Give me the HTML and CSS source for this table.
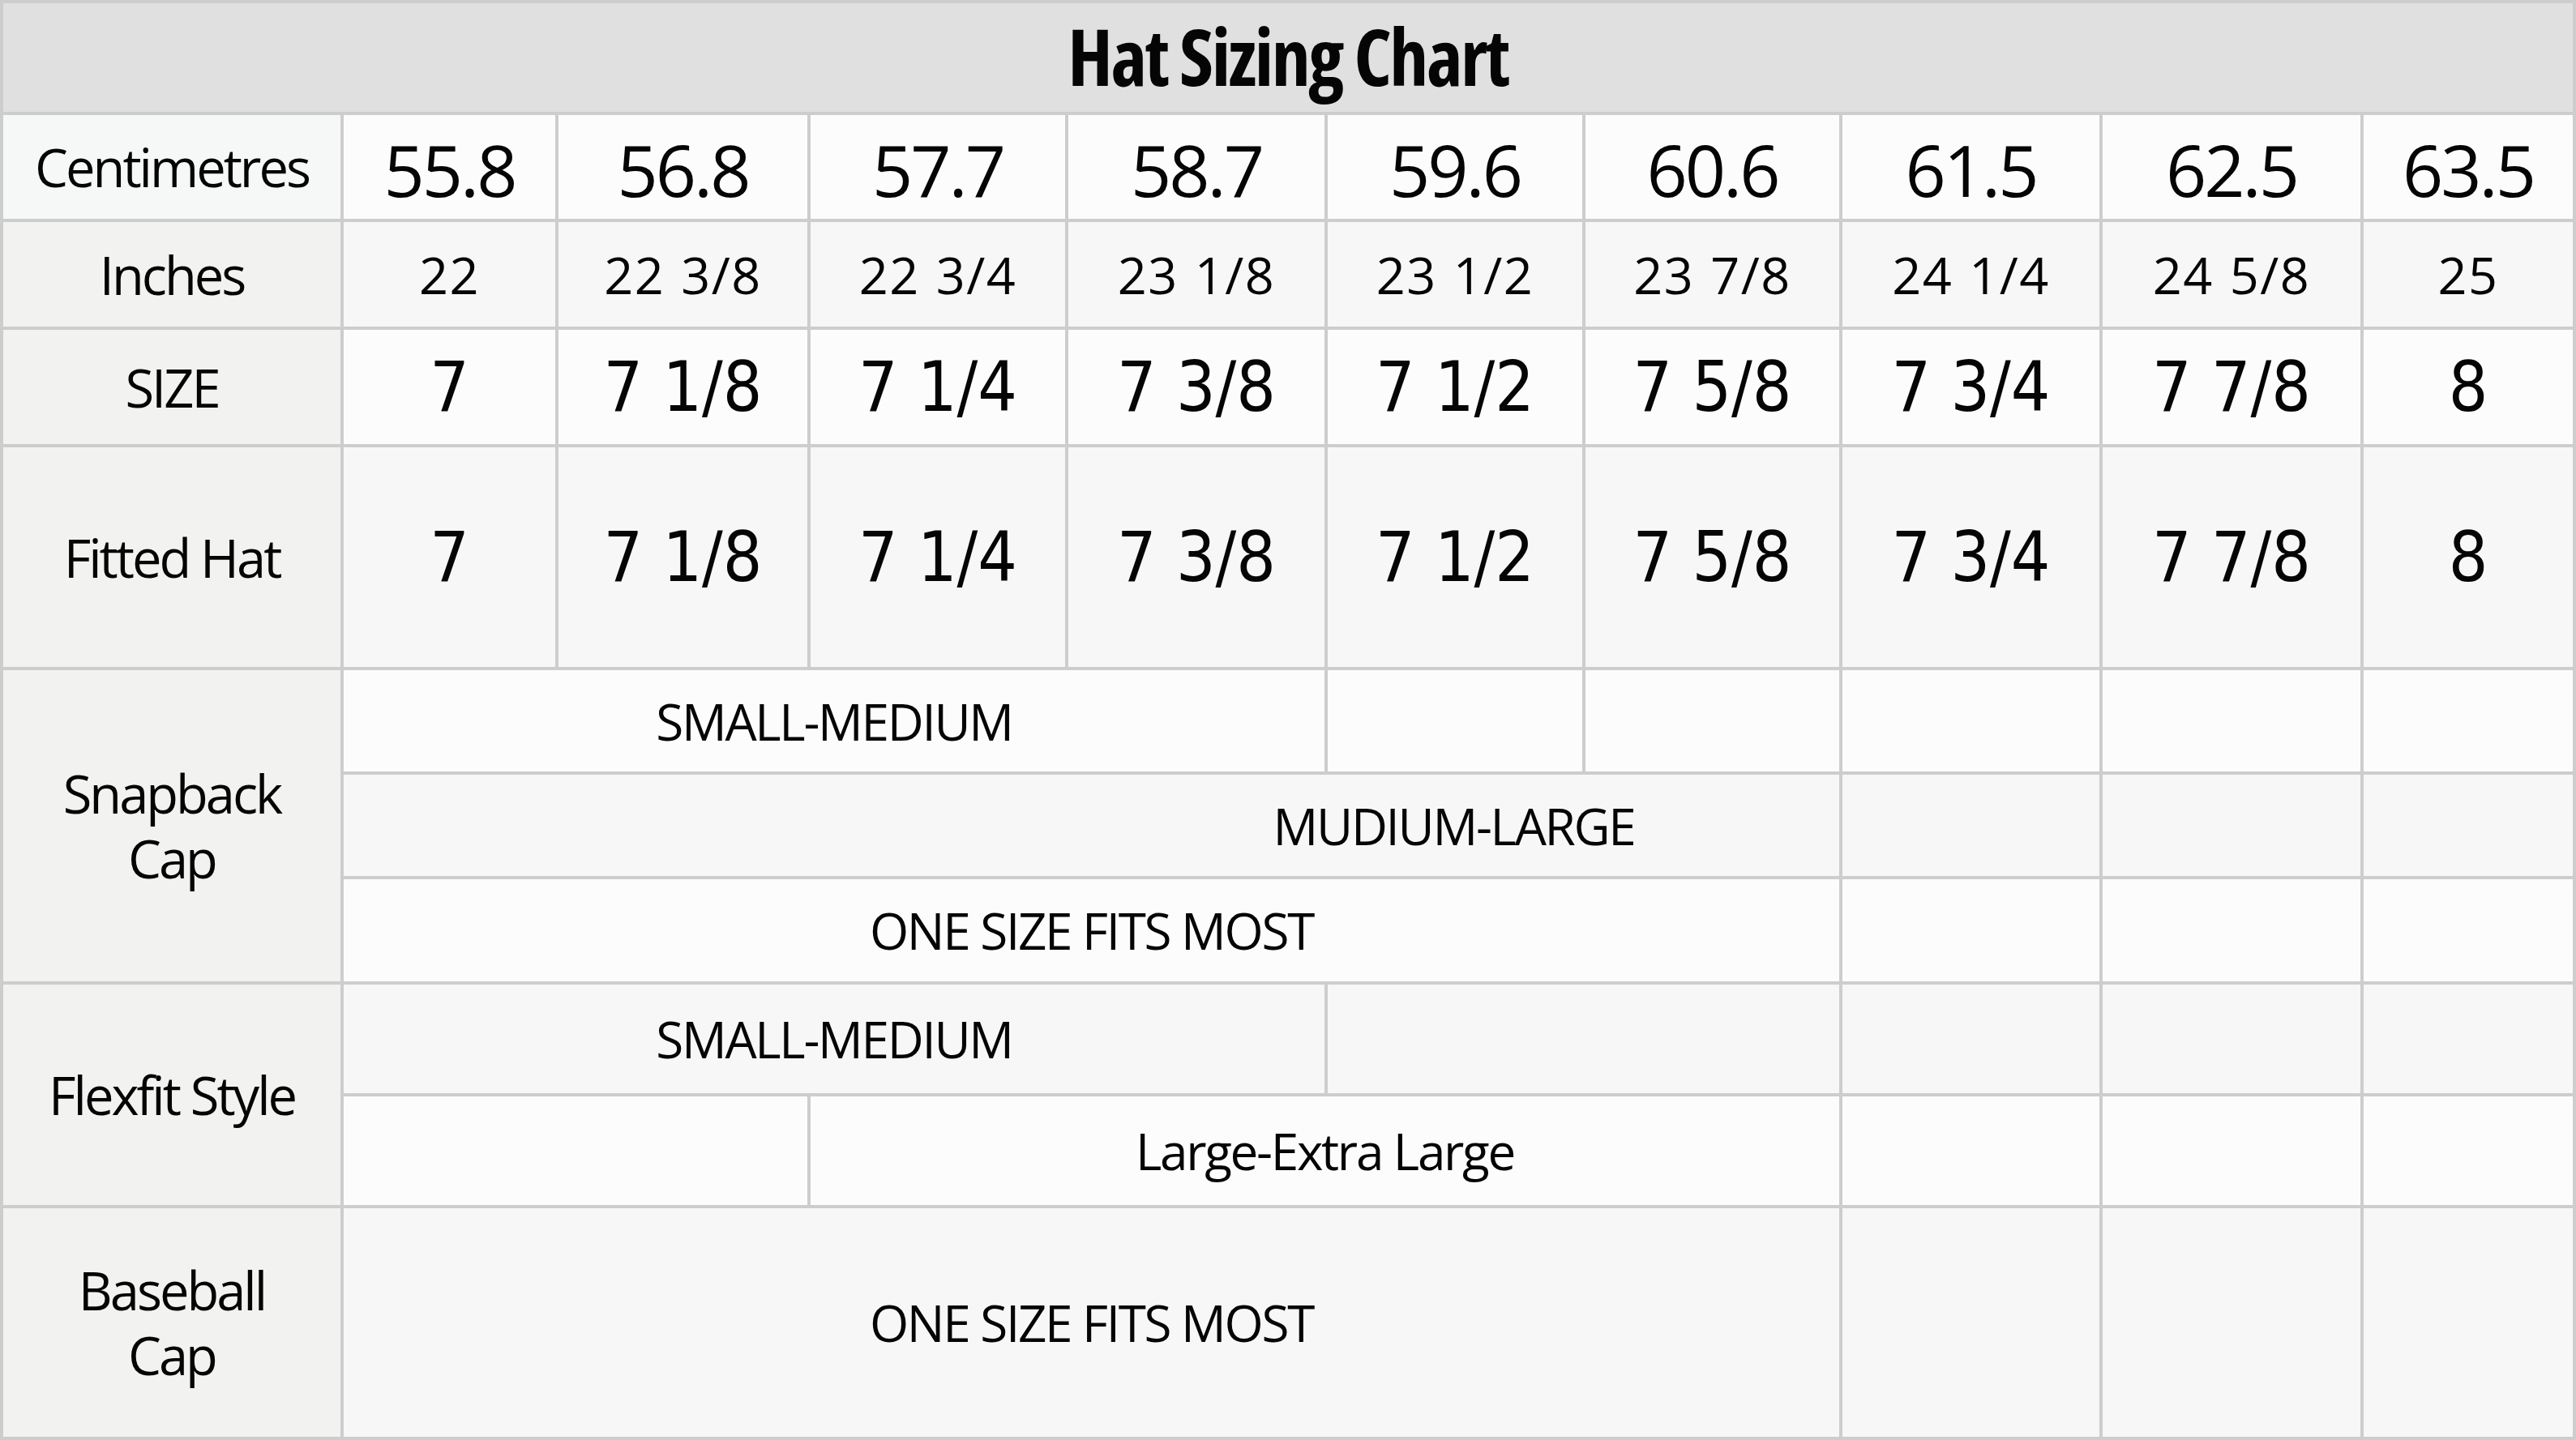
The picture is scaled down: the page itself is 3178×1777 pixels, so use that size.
FILE: index.html
```html
<!DOCTYPE html>
<html lang="en">
<head>
<meta charset="utf-8">
<title>Hat Sizing Chart</title>
<link rel="stylesheet" href="styles.css">
</head>
<body>
<div class="chart">
  <div class="title">Hat Sizing Chart</div>

  <div class="label label-first">Centimetres</div>
  <div class="cell row-white num-cm">55.8</div>
  <div class="cell row-white num-cm">56.8</div>
  <div class="cell row-white num-cm">57.7</div>
  <div class="cell row-white num-cm">58.7</div>
  <div class="cell row-white num-cm">59.6</div>
  <div class="cell row-white num-cm">60.6</div>
  <div class="cell row-white num-cm">61.5</div>
  <div class="cell row-white num-cm">62.5</div>
  <div class="cell row-white num-cm">63.5</div>

  <div class="label">Inches</div>
  <div class="cell row-grey num-in">22</div>
  <div class="cell row-grey num-in">22 3/8</div>
  <div class="cell row-grey num-in">22 3/4</div>
  <div class="cell row-grey num-in">23 1/8</div>
  <div class="cell row-grey num-in">23 1/2</div>
  <div class="cell row-grey num-in">23 7/8</div>
  <div class="cell row-grey num-in">24 1/4</div>
  <div class="cell row-grey num-in">24 5/8</div>
  <div class="cell row-grey num-in">25</div>

  <div class="label">SIZE</div>
  <div class="cell row-white num-size">7</div>
  <div class="cell row-white num-size">7 1/8</div>
  <div class="cell row-white num-size">7 1/4</div>
  <div class="cell row-white num-size">7 3/8</div>
  <div class="cell row-white num-size">7 1/2</div>
  <div class="cell row-white num-size">7 5/8</div>
  <div class="cell row-white num-size">7 3/4</div>
  <div class="cell row-white num-size">7 7/8</div>
  <div class="cell row-white num-size">8</div>

  <div class="label">Fitted Hat</div>
  <div class="cell row-grey num-size">7</div>
  <div class="cell row-grey num-size">7 1/8</div>
  <div class="cell row-grey num-size">7 1/4</div>
  <div class="cell row-grey num-size">7 3/8</div>
  <div class="cell row-grey num-size">7 1/2</div>
  <div class="cell row-grey num-size">7 5/8</div>
  <div class="cell row-grey num-size">7 3/4</div>
  <div class="cell row-grey num-size">7 7/8</div>
  <div class="cell row-grey num-size">8</div>

  <div class="label rows-3">Snapback<br>Cap</div>
  <div class="cell row-white range span-4">SMALL-MEDIUM</div>
  <div class="cell row-white"></div>
  <div class="cell row-white"></div>
  <div class="cell row-white"></div>
  <div class="cell row-white"></div>
  <div class="cell row-white"></div>

  <div class="cell row-grey range span-6 shifted">MUDIUM-LARGE</div>
  <div class="cell row-grey"></div>
  <div class="cell row-grey"></div>
  <div class="cell row-grey"></div>

  <div class="cell row-white range span-6">ONE SIZE FITS MOST</div>
  <div class="cell row-white"></div>
  <div class="cell row-white"></div>
  <div class="cell row-white"></div>

  <div class="label rows-2">Flexfit Style</div>
  <div class="cell row-grey range span-4">SMALL-MEDIUM</div>
  <div class="cell row-grey span-2"></div>
  <div class="cell row-grey"></div>
  <div class="cell row-grey"></div>
  <div class="cell row-grey"></div>

  <div class="cell row-white span-2"></div>
  <div class="cell row-white range span-4">Large-Extra Large</div>
  <div class="cell row-white"></div>
  <div class="cell row-white"></div>
  <div class="cell row-white"></div>

  <div class="label">Baseball<br>Cap</div>
  <div class="cell row-grey range span-6">ONE SIZE FITS MOST</div>
  <div class="cell row-grey"></div>
  <div class="cell row-grey"></div>
  <div class="cell row-grey"></div>
</div>
</body>
</html>
```

FILE: styles.css
```css
html, body {
  margin: 0;
  padding: 0;
  background: #ffffff;
}

.chart {
  box-sizing: border-box;
  width: 3178px;
  height: 1777px;
  display: grid;
  grid-template-columns: 416px 261px 307px 314px 316px 314px 313px 317px 318px 258px;
  grid-template-rows: 134px 128px 129px 141px 271px 125px 125px 126px 134px 134px 282px;
  gap: 4px;
  padding: 4px;
  background: #cdcdcd;
  font-family: "Open Sans", "Noto Sans", "Liberation Sans", sans-serif;
  font-stretch: normal;
  color: #050505;
}

.title,
.label,
.cell {
  display: flex;
  align-items: center;
  justify-content: center;
  text-align: center;
  white-space: nowrap;
}

.title {
  grid-column: 1 / -1;
  background: #dfe0df;
  font-weight: 700;
  font-size: 96px;
  font-stretch: 75%;
  letter-spacing: -2.5px;
  line-height: 1;
  padding-bottom: 4px;
}

.label {
  background: #f2f2f1;
  font-size: 65px;
  letter-spacing: -3px;
  line-height: 80px;
}

.label-first {
  background: #f6f8f7;
}

.rows-3 {
  grid-row: span 3;
}

.rows-2 {
  grid-row: span 2;
}

.row-white {
  background: #fcfcfc;
}

.row-grey {
  background: #f6f7f6;
}

.num-cm {
  font-size: 88px;
  letter-spacing: -3px;
  padding-top: 6px;
}

.num-in {
  font-size: 63px;
  letter-spacing: 1.5px;
  word-spacing: 2px;
}

.num-size {
  font-family: "DejaVu Sans", "Liberation Sans", sans-serif;
  font-stretch: condensed;
  font-size: 85px;
}

.range {
  font-size: 62px;
  letter-spacing: -2.3px;
}

.span-2 {
  grid-column: span 2;
}

.span-4 {
  grid-column: span 4;
}

.span-6 {
  grid-column: span 6;
}

.shifted {
  padding-left: 894px;
}
```
